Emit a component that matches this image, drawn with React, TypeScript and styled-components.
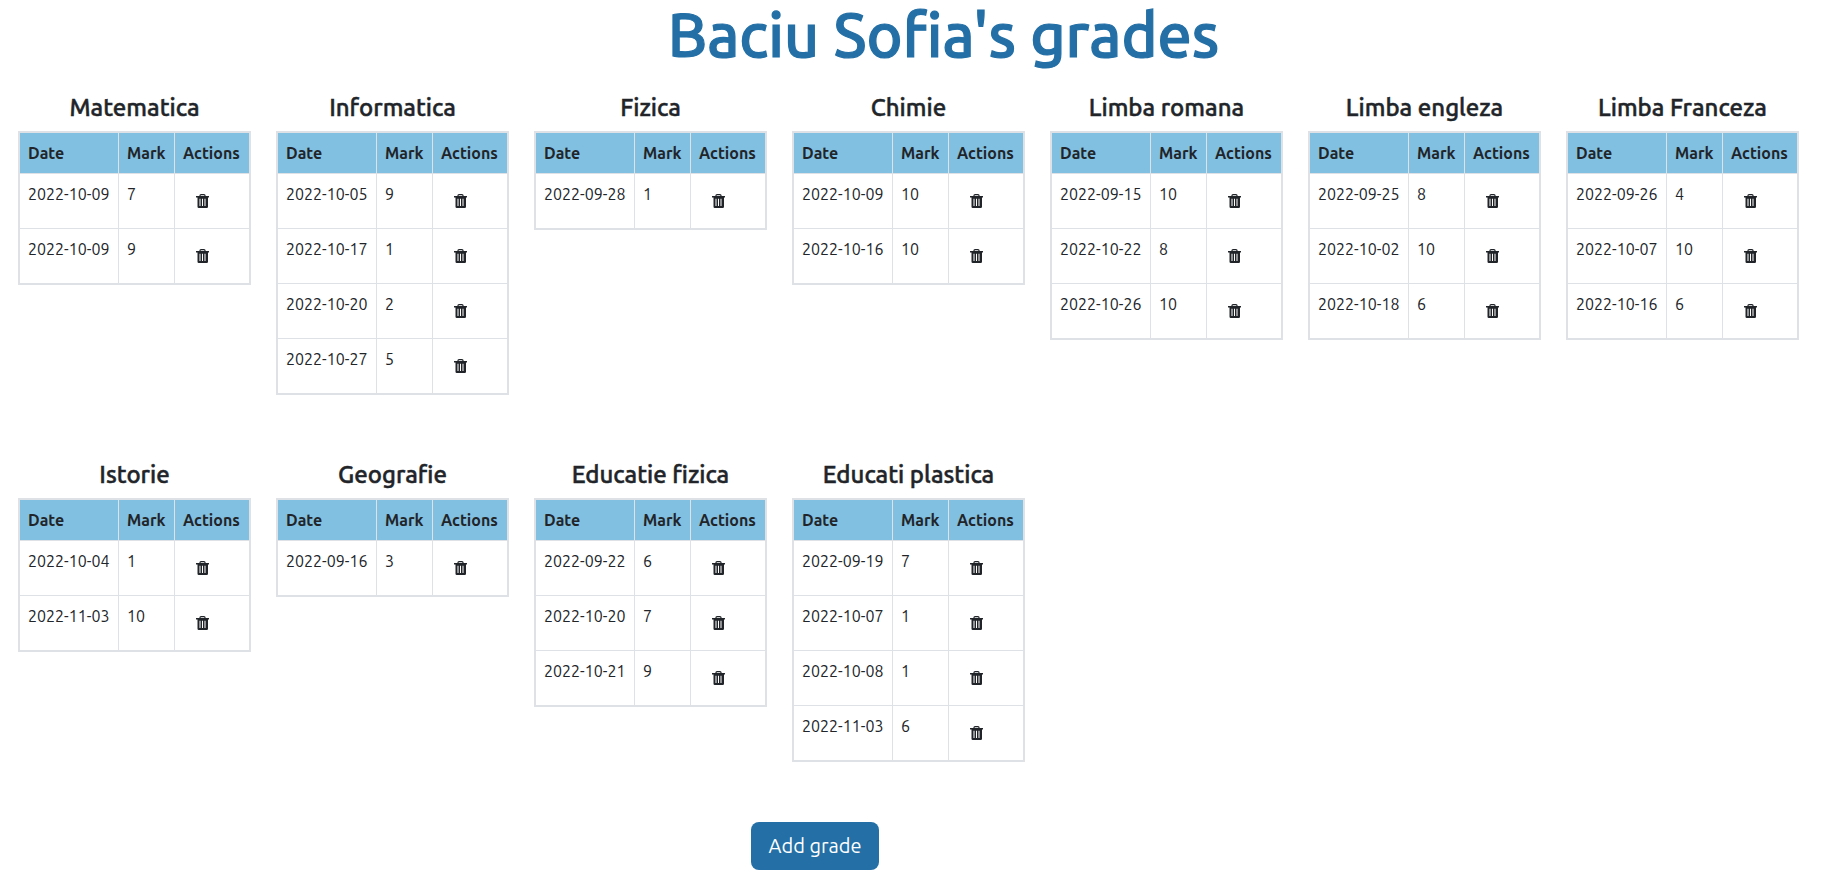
import React from "react";
import styled, { createGlobalStyle } from "styled-components";

const GlobalStyle = createGlobalStyle`
  *, *::before, *::after { box-sizing: border-box; }
  body {
    margin: 0;
    background: #ffffff;
    color: #212529;
    font-family: Ubuntu, "Noto Sans", sans-serif;
    font-size: 16px;
    line-height: 24px;
  }
`;

const Page = styled.main`
  padding-bottom: 16px;
`;

const PageTitle = styled.h1`
  margin: 0 0 23px;
  padding-left: 66px;
  color: #236fa6;
  font-size: 61px;
  font-weight: 500;
  line-height: 70px;
  text-align: center;
  -webkit-text-stroke: 0.02em currentColor;
`;

const SubjectList = styled.div`
  display: flex;
  flex-wrap: wrap;
  align-items: flex-start;
  gap: 65px 25px;
  padding: 0 18px;
`;

const Subject = styled.section`
  width: 233px;
`;

const SubjectTitle = styled.h4`
  margin: 0 0 9px;
  font-size: 24px;
  font-weight: 500;
  line-height: 29px;
  text-align: center;
  white-space: nowrap;
  -webkit-text-stroke: 0.02em currentColor;
`;

const GradeTable = styled.table`
  width: 100%;
  table-layout: fixed;
  border: 2px solid #dee2e6;
  border-collapse: separate;
  border-spacing: 0;
`;

const HeadCell = styled.th<{ $width: number }>`
  width: ${({ $width }) => $width}px;
  height: 41px;
  padding: 8px 0 8px 8px;
  background: #81c0e1;
  border-right: 1px solid #dee2e6;
  border-bottom: 1px solid #dee2e6;
  font-weight: 700;
  text-align: left;

  &:last-child { border-right: 0; }
`;

const Cell = styled.td`
  padding: 8px 0 8px 8px;
  border-right: 1px solid #dee2e6;
  border-bottom: 1px solid #dee2e6;
  vertical-align: top;
  white-space: nowrap;

  &:last-child { border-right: 0; }
  tr:last-child > & { border-bottom: 0; }
`;

const DeleteButton = styled.button`
  display: flex;
  align-items: center;
  height: 38px;
  padding: 0 13px;
  border: 0;
  border-radius: 6px;
  background: transparent;
  color: #212529;
  cursor: pointer;
`;

const Footer = styled.div`
  display: flex;
  justify-content: center;
  margin-top: 60px;
  padding-right: 191px;
`;

const AddButton = styled.button`
  width: 128px;
  height: 48px;
  padding: 0;
  border: 0;
  border-radius: 8px;
  background: #236fa6;
  color: #ffffff;
  font-family: inherit;
  font-size: 20px;
  line-height: 30px;
  cursor: pointer;
`;

const TrashIcon = () => (
  <svg width="13" height="14" viewBox="0 0 13 14" aria-hidden="true">
    <path d="M4 2.5V1.6Q4 .7 5 .7H8Q9 .7 9 1.6V2.5" fill="none" stroke="currentColor" strokeWidth="1.2" />
    <path
      d="M0 2H13V3.4H12V12.8Q12 14 10.8 14H2.7Q1.5 14 1.5 12.8V3.4H0ZM3.5 4.8V12H4.5V4.8ZM6 4.8V12H7V4.8ZM8.5 4.8V12H9.5V4.8Z"
      fill="currentColor"
      fillRule="evenodd"
    />
  </svg>
);

type Grade = [date: string, mark: number];

const subjects: { name: string; grades: Grade[] }[] = [
  { name: "Matematica", grades: [["2022-10-09", 7], ["2022-10-09", 9]] },
  { name: "Informatica", grades: [["2022-10-05", 9], ["2022-10-17", 1], ["2022-10-20", 2], ["2022-10-27", 5]] },
  { name: "Fizica", grades: [["2022-09-28", 1]] },
  { name: "Chimie", grades: [["2022-10-09", 10], ["2022-10-16", 10]] },
  { name: "Limba romana", grades: [["2022-09-15", 10], ["2022-10-22", 8], ["2022-10-26", 10]] },
  { name: "Limba engleza", grades: [["2022-09-25", 8], ["2022-10-02", 10], ["2022-10-18", 6]] },
  { name: "Limba Franceza", grades: [["2022-09-26", 4], ["2022-10-07", 10], ["2022-10-16", 6]] },
  { name: "Istorie", grades: [["2022-10-04", 1], ["2022-11-03", 10]] },
  { name: "Geografie", grades: [["2022-09-16", 3]] },
  { name: "Educatie fizica", grades: [["2022-09-22", 6], ["2022-10-20", 7], ["2022-10-21", 9]] },
  { name: "Educati plastica", grades: [["2022-09-19", 7], ["2022-10-07", 1], ["2022-10-08", 1], ["2022-11-03", 6]] },
];

export default function App() {
  return (
    <>
      <GlobalStyle />
      <Page>
        <PageTitle>Baciu Sofia's grades</PageTitle>
        <SubjectList>
          {subjects.map(({ name, grades }) => (
            <Subject key={name}>
              <SubjectTitle>{name}</SubjectTitle>
              <GradeTable aria-label={name}>
                <thead>
                  <tr>
                    <HeadCell $width={99} scope="col">Date</HeadCell>
                    <HeadCell $width={56} scope="col">Mark</HeadCell>
                    <HeadCell $width={74} scope="col">Actions</HeadCell>
                  </tr>
                </thead>
                <tbody>
                  {grades.map(([date, mark], i) => (
                    <tr key={i}>
                      <Cell>{date}</Cell>
                      <Cell>{mark}</Cell>
                      <Cell>
                        <DeleteButton type="button" aria-label={`Delete grade from ${date}`}>
                          <TrashIcon />
                        </DeleteButton>
                      </Cell>
                    </tr>
                  ))}
                </tbody>
              </GradeTable>
            </Subject>
          ))}
        </SubjectList>
        <Footer>
          <AddButton type="button">Add grade</AddButton>
        </Footer>
      </Page>
    </>
  );
}
